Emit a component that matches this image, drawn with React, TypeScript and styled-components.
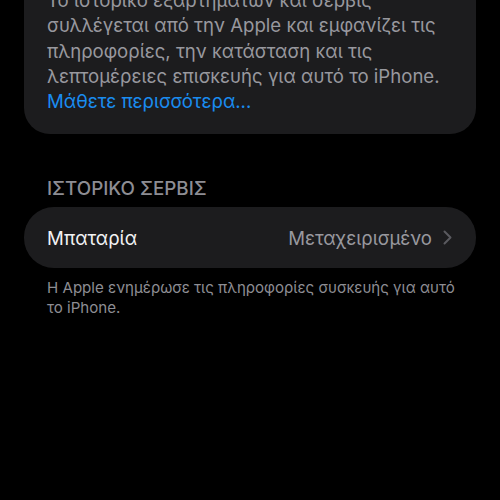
import styled, { createGlobalStyle } from "styled-components";

const Global = createGlobalStyle`
  html, body {
    margin: 0;
    padding: 0;
    background: #000;
  }
  body {
    font-family: Inter, "Noto Sans", "Liberation Sans", sans-serif;
    -webkit-font-smoothing: antialiased;
  }
`;

export default function App() {
  return (
    <Page>
      <Global />
      <InfoCard>
        <InfoText>
          Το ιστορικό εξαρτημάτων και σέρβις συλλέγεται από την Apple και
          εμφανίζει τις πληροφορίες, την κατάσταση και τις λεπτομέρειες
          επισκευής για αυτό το iPhone.
        </InfoText>
        <LearnMore href="#">Μάθετε περισσότερα...</LearnMore>
      </InfoCard>

      <SectionHeader>ΙΣΤΟΡΙΚΟ ΣΕΡΒΙΣ</SectionHeader>
      <Row>
        <RowLabel>Μπαταρία</RowLabel>
        <RowValue>
          Μεταχειρισμένο
          <Chevron viewBox="0 0 9 15" aria-hidden>
            <path d="M1.5 1.5 L7.5 7.5 L1.5 13.5" />
          </Chevron>
        </RowValue>
      </Row>
      <Footnote>
        Η Apple ενημέρωσε τις πληροφορίες συσκευής για αυτό το iPhone.
      </Footnote>
    </Page>
  );
}

const Page = styled.div`
  width: 500px;
  height: 500px;
  overflow: hidden;
  background: #000;
  padding: 0 24px;
  box-sizing: border-box;
`;

const InfoCard = styled.div`
  margin-top: -40px;
  padding: 28px 23px 20px;
  background: #1c1c1e;
  border-radius: 26px;
`;

const InfoText = styled.div`
  font-size: 18.6px;
  line-height: 25.3px;
  color: #98989e;
`;

const LearnMore = styled.a`
  display: block;
  font-size: 18.6px;
  line-height: 25.3px;
  color: #1a8cf0;
  text-decoration: none;
`;

const SectionHeader = styled.div`
  margin: 44px 0 0 23px;
  font-size: 18.8px;
  line-height: 22px;
  color: #8d8d93;
  font-weight: 500;
`;

const Row = styled.div`
  margin-top: 7px;
  height: 61px;
  padding: 0 24px 0 23px;
  display: flex;
  align-items: center;
  justify-content: space-between;
  background: #1c1c1e;
  border-radius: 30px;
`;

const RowLabel = styled.div`
  font-size: 18.6px;
  color: #f2f2f4;
`;

const RowValue = styled.div`
  display: flex;
  align-items: center;
  gap: 11px;
  font-size: 18.6px;
  color: #98989e;
`;

const Chevron = styled.svg`
  width: 9px;
  height: 15px;
  fill: none;
  stroke: #5a5a5f;
  stroke-width: 2;
  stroke-linecap: round;
  stroke-linejoin: round;
`;

const Footnote = styled.div`
  margin: 10px 18px 0 23px;
  font-size: 15.1px;
  line-height: 19.5px;
  color: #8d8d93;
`;
